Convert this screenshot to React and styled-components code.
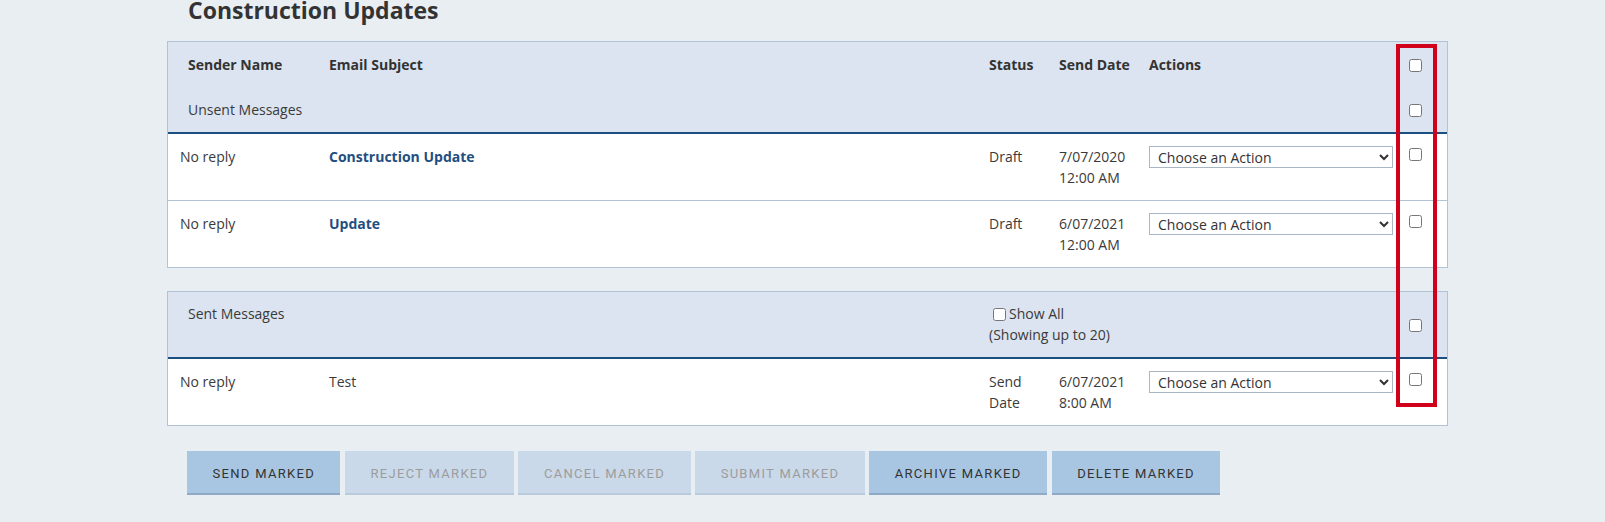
import React from "react";
import styled, { createGlobalStyle } from "styled-components";

const Global = createGlobalStyle`
  html, body { margin: 0; padding: 0; background: #e9eef3; }
  body { font-family: "Open Sans", "Noto Sans", sans-serif; font-size: 14px; color: #333; }
`;

const Page = styled.div`
  position: relative;
  display: flow-root;
  margin-left: 167px;
  width: 1281px;
`;

const Title = styled.h1`
  margin: -5px 0 15px 21px;
  font-size: 23px;
  line-height: 31px;
  font-weight: 700;
  color: #333;
`;

const Table = styled.div`
  background: #fff;
  border: 1px solid #b3c3d6;
  margin-bottom: ${(p) => p.$mb || 0}px;
`;

const COLS = "149px 660px 70px 90px 260px 1fr";

const Row = styled.div`
  display: grid;
  grid-template-columns: ${COLS};
  background: ${(p) => (p.$head ? "#dbe4f0" : "#fff")};
  border-bottom: ${(p) =>
    p.$thick
      ? "2px solid #1b4f80"
      : p.$last || p.$head
      ? "none"
      : "1px solid #b3c3d6"};
`;

const Cell = styled.div`
  padding: ${(p) => p.$pad || "12px 12px"};
  padding-left: ${(p) => (p.$first ? "20px" : "12px")};
  line-height: 21px;
  font-weight: ${(p) => (p.$bold ? 700 : 400)};
  color: ${(p) => (p.$link ? "#1f4f7f" : p.$bold ? "#333" : "#3a3a3a")};
  white-space: ${(p) => (p.$nowrap ? "nowrap" : "normal")};
  grid-column: ${(p) => p.$span || "auto"};
  align-self: ${(p) => (p.$middle ? "center" : "start")};
  display: ${(p) => (p.$middle ? "flex" : "block")};
  align-items: center;
`;

const Box = styled.input.attrs({ type: "checkbox" })`
  width: 13px;
  height: 13px;
  margin: ${(p) => (p.$inline ? "3px 3px 3px 4px" : "2px 0 0 0")};
  vertical-align: ${(p) => (p.$inline ? "-2px" : "top")};
`;

const Select = styled.select`
  width: 244px;
  height: 22px;
  border: 1px solid #a9b6c4;
  border-radius: 0;
  background: #fff;
  font-family: "Open Sans", "Noto Sans", sans-serif;
  font-size: 14px;
  color: #333;
  padding: 0 4px;
  margin: 0;
  display: block;
`;

const Buttons = styled.div`
  display: flex;
  gap: 4.5px;
  margin: 25px 0 0 20px;
`;

const Button = styled.button`
  height: 44px;
  padding: 2px 25.5px 0;
  border: none;
  border-bottom: 2px solid ${(p) => (p.disabled ? "#b9cadd" : "#8eaac7")};
  background: ${(p) => (p.disabled ? "#c9d9ea" : "#a8c6e2")};
  color: ${(p) => (p.disabled ? "#9c9c9c" : "#333")};
  font-family: Roboto, "Liberation Sans", sans-serif;
  font-size: 13px;
  font-weight: 400;
  letter-spacing: 1.3px;
  text-transform: uppercase;
  cursor: pointer;
`;

const Highlight = styled.div`
  position: absolute;
  left: 1229px;
  top: 44px;
  width: 41px;
  height: 363px;
  box-sizing: border-box;
  border: 4px solid #d0021b;
  pointer-events: none;
`;

const ActionSelect = () => (
  <Select defaultValue="">
    <option value="">Choose an Action</option>
    <option>Send</option>
    <option>Archive</option>
    <option>Delete</option>
  </Select>
);

const unsent = [
  { sender: "No reply", subject: "Construction Update", status: "Draft", date: "7/07/2020", time: "12:00 AM" },
  { sender: "No reply", subject: "Update", status: "Draft", date: "6/07/2021", time: "12:00 AM" },
];

export default function App() {
  return (
    <>
      <Global />
      <Page>
        <Title>Construction Updates</Title>

        <Table $mb={23}>
          <Row $head>
            <Cell $first $bold $nowrap>Sender Name</Cell>
            <Cell $bold $nowrap>Email Subject</Cell>
            <Cell $bold $nowrap>Status</Cell>
            <Cell $bold $nowrap>Send Date</Cell>
            <Cell $bold $nowrap>Actions</Cell>
            <Cell $middle><Box /></Cell>
          </Row>
          <Row $head $thick>
            <Cell $first $nowrap $span="1 / 6">Unsent Messages</Cell>
            <Cell $middle><Box /></Cell>
          </Row>
          {unsent.map((m, i) => (
            <Row key={i} $last={i === unsent.length - 1}>
              <Cell>{m.sender}</Cell>
              <Cell $bold $link>{m.subject}</Cell>
              <Cell>{m.status}</Cell>
              <Cell>{m.date}<br />{m.time}</Cell>
              <Cell><ActionSelect /></Cell>
              <Cell><Box /></Cell>
            </Row>
          ))}
        </Table>

        <Table>
          <Row $head $thick>
            <Cell $first $nowrap $span="1 / 3" $pad="11px 12px 12px">Sent Messages</Cell>
            <Cell $nowrap $span="3 / 6" $pad="11px 12px 12px">
              <Box $inline />Show All<br />(Showing up to 20)
            </Cell>
            <Cell $middle><Box /></Cell>
          </Row>
          <Row $last>
            <Cell>No reply</Cell>
            <Cell>Test</Cell>
            <Cell>Send Date</Cell>
            <Cell>6/07/2021<br />8:00 AM</Cell>
            <Cell><ActionSelect /></Cell>
            <Cell><Box /></Cell>
          </Row>
        </Table>

        <Buttons>
          <Button>Send Marked</Button>
          <Button disabled>Reject Marked</Button>
          <Button disabled>Cancel Marked</Button>
          <Button disabled>Submit Marked</Button>
          <Button>Archive Marked</Button>
          <Button>Delete Marked</Button>
        </Buttons>

        <Highlight />
      </Page>
    </>
  );
}
